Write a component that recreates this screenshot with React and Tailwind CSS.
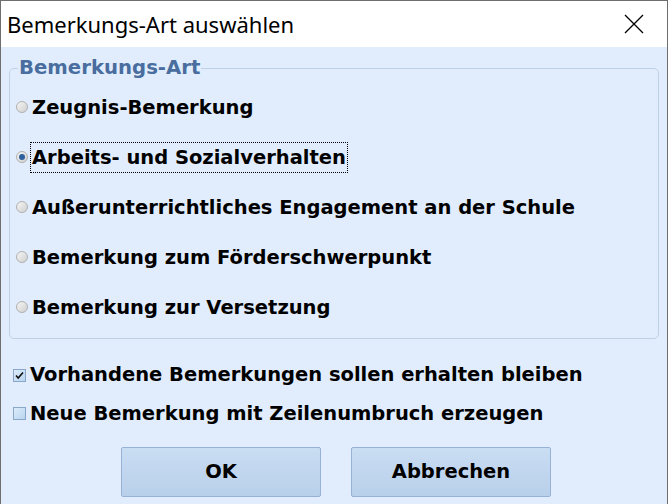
import { useState } from 'react';

const options = [
    'Zeugnis-Bemerkung',
    'Arbeits- und Sozialverhalten',
    'Außerunterrichtliches Engagement an der Schule',
    'Bemerkung zum Förderschwerpunkt',
    'Bemerkung zur Versetzung',
];

function Radio({ checked }) {
    return (
        <span className="w-[12px] h-[12px] rounded-full border border-[#b0b0b0] bg-gradient-to-br from-[#f6f6f6] to-[#cfcfcf] flex items-center justify-center shrink-0">
            {checked && <span className="w-[6px] h-[6px] rounded-full bg-[#2f5f9c]" />}
        </span>
    );
}

function Check({ checked }) {
    return (
        <span className="w-[13px] h-[13px] border border-[#8aa6c8] bg-gradient-to-br from-[#dcecfa] to-[#b8d4ee] flex items-center justify-center shrink-0">
            {checked && (
                <svg width="9" height="9" viewBox="0 0 9 9">
                    <path d="M1 4.5 L3.2 7 L8 1.5" fill="none" stroke="#111" strokeWidth="1.6" />
                </svg>
            )}
        </span>
    );
}

export default function App() {
    const [selected, setSelected] = useState(1);
    const [keep, setKeep] = useState(true);
    const [wrap, setWrap] = useState(false);

    return (
        <div className="w-[668px] h-[504px] border-x border-t border-[#6e6e6e] flex flex-col bg-[#e1edfd] font-['DejaVu_Sans',sans-serif] text-black">
            {/* Title bar */}
            <div className="h-[46px] bg-white flex items-center justify-between pl-[6px] pr-[23px] shrink-0">
                <span className="font-['Noto_Sans',sans-serif] text-[22px] leading-none">Bemerkungs-Art auswählen</span>
                <svg width="20" height="20" viewBox="0 0 20 20">
                    <path d="M1 1 L19 19 M19 1 L1 19" stroke="#000" strokeWidth="1.3" />
                </svg>
            </div>

            <div className="flex flex-col px-[8px] pt-[10px]">
                <fieldset className="border border-[#bdd2e4] rounded-[5px] px-[6px] pb-[12px] pt-0 m-0 h-[282px]">
                    <legend className="ml-[2px] px-[1px] text-[19.7px] font-bold text-[#4a6d9f] leading-[22px]">Bemerkungs-Art</legend>
                    <div className="flex flex-col mt-[3px]">
                        {options.map((o, i) => (
                            <label key={o} className="h-[50px] flex items-center gap-[2px]" onClick={() => setSelected(i)}>
                                <Radio checked={selected === i} />
                                <span
                                    className={
                                        'text-[19.5px] font-bold leading-[29px] px-[1px] border border-dotted ' +
                                        (selected === i ? 'border-black' : 'border-transparent')
                                    }
                                >
                                    {o}
                                </span>
                            </label>
                        ))}
                    </div>
                </fieldset>

                <div className="flex flex-col mt-[17px] pl-[4px]">
                    <label className="h-[38px] flex items-center gap-[4px]" onClick={() => setKeep(!keep)}>
                        <Check checked={keep} />
                        <span className="text-[19.5px] font-bold">Vorhandene Bemerkungen sollen erhalten bleiben</span>
                    </label>
                    <label className="h-[39px] flex items-center gap-[4px]" onClick={() => setWrap(!wrap)}>
                        <Check checked={wrap} />
                        <span className="text-[19.5px] font-bold">Neue Bemerkung mit Zeilenumbruch erzeugen</span>
                    </label>
                </div>

                <div className="flex justify-center gap-[30px] mt-[14px] pl-[4px]">
                    <button className="w-[200px] h-[50px] rounded-[2px] border border-[#98b1d6] bg-gradient-to-b from-[#c9ddf3] to-[#b9d0ea] text-[19.5px] font-bold">
                        OK
                    </button>
                    <button className="w-[200px] h-[50px] rounded-[2px] border border-[#98b1d6] bg-gradient-to-b from-[#c9ddf3] to-[#b9d0ea] text-[19.5px] font-bold">
                        Abbrechen
                    </button>
                </div>
            </div>
        </div>
    );
}
